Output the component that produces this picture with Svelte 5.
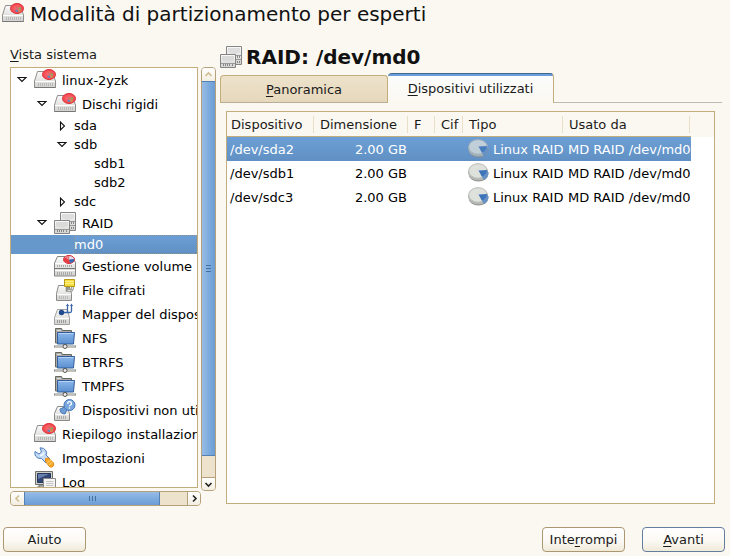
<script>
  const tree = [
    { label: 'linux-2yzk', depth: 0, icon: 'disk', arrow: 'down' },
    { label: 'Dischi rigidi', depth: 1, icon: 'disk', arrow: 'down' },
    { label: 'sda', depth: 2, arrow: 'right' },
    { label: 'sdb', depth: 2, arrow: 'down' },
    { label: 'sdb1', depth: 3 },
    { label: 'sdb2', depth: 3 },
    { label: 'sdc', depth: 2, arrow: 'right' },
    { label: 'RAID', depth: 1, icon: 'raid', arrow: 'down' },
    { label: 'md0', depth: 2 },
    { label: 'Gestione volume', depth: 1, icon: 'lvm' },
    { label: 'File cifrati', depth: 1, icon: 'crypt' },
    { label: 'Mapper del dispositivo', depth: 1, icon: 'mapper' },
    { label: 'NFS', depth: 1, icon: 'net' },
    { label: 'BTRFS', depth: 1, icon: 'net' },
    { label: 'TMPFS', depth: 1, icon: 'net' },
    { label: 'Dispositivi non utilizzati', depth: 1, icon: 'unused' },
    { label: 'Riepilogo installazione', depth: 0, icon: 'disk' },
    { label: 'Impostazioni', depth: 0, icon: 'tools' },
    { label: 'Log', depth: 0, icon: 'log' }
  ];
  const devices = ['/dev/sda2', '/dev/sdb1', '/dev/sdc3'];
  let selectedNode = $state('md0');
  let selectedDevice = $state('/dev/sda2');
</script>

{#snippet icon(name)}
  <svg class="icon" viewBox="0 0 22 22" aria-hidden="true"><use href="#i-{name}" /></svg>
{/snippet}

<svg width="0" height="0" class="defs" aria-hidden="true">
  <defs>
    <linearGradient id="metal" x2="0" y2="1"><stop stop-color="#fafafa" /><stop offset="1" stop-color="#d2d2d0" /></linearGradient>
    <linearGradient id="folder" x2="0" y2="1"><stop stop-color="#8db8ea" /><stop offset="1" stop-color="#5b8fd0" /></linearGradient>
    <radialGradient id="red"><stop stop-color="#ff7070" /><stop offset="1" stop-color="#f0464e" /></radialGradient>
    <symbol id="i-disk" viewBox="0 0 22 22">
      <path d="M3.500 2.500h14.500l3.500 9.500v6.500H.5V12z" fill="url(#metal)" stroke="#8f8f8d" />
      <path d="M1 12.500h20" stroke="#fff" /><path d="M.5 18.500h21" stroke="#777" />
      <path d="M4.500 14v3M6.500 14v3M8.500 14v3M10.500 14v3M12.500 14v3M14.500 14v3M16.500 14v3M18.500 14v3" stroke="#b9b9b7" />
      <ellipse cx="15" cy="5.500" rx="6.500" ry="5" fill="url(#red)" stroke="#dc2f38" />
      <path d="M14 3.500l2 .5v2h-2z" fill="#d2706a" /><path d="M16.500 4.500h2.500v2h-2.500z" fill="#7fae61" /><path d="M13.500 6.500l2.500.5v2l-2.500-.5z" fill="#5d84c8" /><path d="M16.500 7h2v2h-2z" fill="#c59a50" />
    </symbol>
    <symbol id="i-raid" viewBox="0 0 22 22">
      <path d="M6.500.5h15v18h-15z" fill="url(#metal)" stroke="#858585" />
      <path d="M8 2h12v4q-6 4-12 0z" fill="#dedede" /><path d="M16 9.500h5M16 13.500h5" stroke="#999" />
      <path d="M17.500 10v2M19.500 10v2M17.500 15v2M19.500 15v2" stroke="#888" />
      <path d="M.5 8.500h15v13H.5z" fill="url(#metal)" stroke="#858585" />
      <path d="M2 10h12v4q-6 3-12 0z" fill="#dadada" /><path d="M1 17.500h14" stroke="#999" />
      <path d="M3.500 18v2M5.500 18v2M7.500 18v2M9.500 18v2M12.500 18v2" stroke="#888" />
    </symbol>
    <symbol id="i-lvm" viewBox="0 0 22 22">
      <path d="M3.500 1.500h14.500l3.500 6v13.500H.5V8z" fill="url(#metal)" stroke="#858583" />
      <path d="M1 8.500h20M1 15.500h20" stroke="#fff" /><path d="M1 13.500h20" stroke="#777" />
      <path d="M3.500 10v2M5.500 10v2M7.500 10v2M9.500 10v2M11.500 10v2M13.500 10v2M15.500 10v2M17.500 10v2M3.500 17v3M5.500 17v3M7.500 17v3M9.500 17v3M11.500 17v3M13.500 17v3M15.500 17v3M17.500 17v3" stroke="#aaa" />
      <ellipse cx="15" cy="4.500" rx="5.500" ry="4" fill="#dfe2ea" stroke="#d32530" />
      <path d="M15 4.500L10.500 2q-2 4 1.500 5.500 2 1 4.500.5z" fill="#ea3d43" /><path d="M15 4.500l1 3.500q4.500-.5 4-4z" fill="#3764ae" /><path d="M15 4.500L10.500 2q2-1.500 5-1z" fill="#ef777a" />
    </symbol>
    <symbol id="i-crypt" viewBox="0 0 22 22">
      <path d="M4.500 6.500h10.500l2.500 8v7h-15v-7z" fill="url(#metal)" stroke="#8a8a88" />
      <path d="M3 15.500h14" stroke="#fff" /><path d="M5.500 17v3M7.500 17v3M9.500 17v3M11.500 17v3M13.500 17v3" stroke="#bbb" />
      <path d="M18.500 7v3q-.5 1.500-2 1.500h-3.500v-3h3" fill="none" stroke="#8e8e8a" stroke-width="2.500" /><path d="M18.500 7v3q-.5 1.500-2 1.500h-3" fill="none" stroke="#deded8" />
      <path d="M10.500.5h10v7h-10z" fill="#f5dc3e" stroke="#b69a16" /><path d="M11 2.500h9M11 4.500h9" stroke="#fff08a" />
    </symbol>
    <symbol id="i-mapper" viewBox="0 0 22 22">
      <path d="M3.500 6.500h9.500l2.500 8v7H.5v-7z" fill="url(#metal)" stroke="#a0a09e" />
      <path d="M1 15.500h14" stroke="#fff" /><path d="M3.500 17v3M5.500 17v3M7.500 17v3M9.500 17v3M11.500 17v3" stroke="#999" />
      <path d="M7 9.500h9q1.500 0 1.500-1.500V2M13.500 9V2" fill="none" stroke="#3765a6" stroke-width="1.300" /><path d="M12 3l1.500-2.500L15 3zM16 3l1.500-2.500L19 3z" fill="#3765a6" />
      <circle cx="7.500" cy="9.500" r="2.700" fill="#204a8b" />
    </symbol>
    <symbol id="i-net" viewBox="0 0 22 22">
      <path d="M1.500 16V1.500h6l1 2h9V16z" fill="#aaa9a3" stroke="#666661" /><path d="M3 3.500h4" stroke="#ddd" />
      <path d="M3.500 5.500h17L19.500 17h-16z" fill="url(#folder)" stroke="#315f9e" /><path d="M4.500 6.500h15" stroke="#b5d1f3" />
      <path d="M0 19.500h22" stroke="#88887f" stroke-width="2" /><path d="M1 19.500h20" stroke="#ccc" stroke-width=".8" />
      <path d="M11 17v1" stroke="#555" stroke-width="3" /><circle cx="11" cy="19.500" r="2" fill="#eee" stroke="#555550" />
    </symbol>
    <symbol id="i-unused" viewBox="0 0 22 22">
      <path d="M3.500 7.500h9.500l2.500 7v7H.5v-7z" fill="url(#metal)" stroke="#8a8a88" />
      <path d="M1 15.500h14" stroke="#fff" /><path d="M3.500 17v3M5.500 17v3M7.500 17v3M9.500 17v3M11.500 17v3" stroke="#aaa" />
      <path d="M6 10l4.500-2 1-2 4 4-3 1.500-1.500 3.500q-5 0-5-5z" fill="#6d9bd6" stroke="#4b78b3" />
      <circle cx="15.500" cy="6" r="5.500" fill="#79a6dd" stroke="#4678b8" />
      <path d="M13.700 4.700q0-2 1.900-2t1.900 1.700q0 1-1 1.600t-1 1.300" fill="none" stroke="#fff" stroke-width="1.300" /><circle cx="15.500" cy="9" r=".8" fill="#fff" />
    </symbol>
    <symbol id="i-tools" viewBox="0 0 22 22">
      <path d="M1 4.500l4 2.500 2.500-2L6 .8q4-.3 6 3 1 2 0 4.200l4 4-4 4-4.500-4.500Q3.500 12 1.500 9 .5 7 1 4.500z" fill="#c4daf4" stroke="#4c7dbd" />
      <path d="M6 8.500q3 0 4-3" stroke="#f2f8ff" fill="none" stroke-width="1.500" />
      <path d="M11.500 11.500l3-.5 5 5q1 3-1.500 4-2 .5-3-1l-3.500-4.500z" fill="#f6a828" stroke="#e48b13" /><path d="M13 16l4-3M15 18l3.500-3" stroke="#ffd479" />
    </symbol>
    <symbol id="i-log" viewBox="0 0 22 22">
      <path d="M1.500.5h17v13h-17z" fill="#d0d0ca" stroke="#6d6d69" /><path d="M3.500 2.500h13v9h-13z" fill="#324675" stroke="#26375f" /><path d="M4 3h11L4 8z" fill="#6880ae" />
      <path d="M5 14h5v2h2v2.500H3V16h2z" fill="#aaa" stroke="#777" />
      <path d="M9.500 7.500h12v14h-12z" fill="#f5f5f5" stroke="#888" /><path d="M12 10.500h7.500M12 12.500h7.500M12 14.500h7.500M12 16.500h7.500" stroke="#c3c3c3" />
    </symbol>
    <symbol id="i-pie" viewBox="0 0 22 22">
      <ellipse cx="10.500" cy="11.500" rx="10" ry="8" fill="#8d908c" /><ellipse cx="10.300" cy="10.500" rx="10" ry="8" fill="#b6b9b5" />
      <ellipse cx="10" cy="9" rx="9.300" ry="7.300" fill="#dfe1dd" stroke="#b7bab5" />
      <path d="M10.500 8.500l8.500-.5q.5 4.500-5 7z" fill="#3e75ba" /><path d="M14 15q5-2.500 5-7l1.500 3q-.5 4.500-4.500 7z" fill="#6590c5" />
    </symbol>
  </defs>
</svg>

<main class="app">
  <header class="title">{@render icon('disk')}<h1>Modalità di partizionamento per esperti</h1></header>

  <div class="content">
    <section class="side">
      <div class="side-label" id="tree-label"><u>V</u>ista sistema</div>
      <div class="tree-area">
        <ul class="tree" role="tree" aria-labelledby="tree-label">
          {#each tree as node}
            <li class="depth{node.depth}" class:tall={node.icon} class:selected={selectedNode === node.label} role="treeitem" aria-selected={selectedNode === node.label}>
              <span class="toggle">
                {#if node.arrow}
                  <button aria-label="Espandi {node.label}">
                    <svg width="12" height="12" viewBox="0 0 12 12">
                      {#if node.arrow === 'down'}
                        <path d="M2 3.500h8L6 7.500z" />
                      {:else}
                        <path d="M4.500 2v8L8.500 6z" />
                      {/if}
                    </svg>
                  </button>
                {/if}
              </span>
              <button class="node" onclick={() => (selectedNode = node.label)}>
                {#if node.icon}{@render icon(node.icon)}{/if}
                <span class="name">{node.label}</span>
              </button>
            </li>
          {/each}
        </ul>
        <div class="bar vertical">
          <button class="step off" aria-label="Su"><svg width="9" height="9" viewBox="0 0 9 9"><path d="M1.500 6l3-3 3 3" /></svg></button>
          <div class="thumb"><i></i><i></i><i></i></div>
          <div class="rest"></div>
          <button class="step" aria-label="Giù"><svg width="9" height="9" viewBox="0 0 9 9"><path d="M1.500 3l3 3 3-3" /></svg></button>
        </div>
      </div>
      <div class="bar horizontal">
        <button class="step off" aria-label="Sinistra"><svg width="9" height="9" viewBox="0 0 9 9"><path d="M6 1.500l-3 3 3 3" /></svg></button>
        <div class="thumb"><i></i><i></i><i></i></div>
        <div class="rest"></div>
        <button class="step" aria-label="Destra"><svg width="9" height="9" viewBox="0 0 9 9"><path d="M3 1.500l3 3-3 3" /></svg></button>
      </div>
    </section>

    <section class="detail">
      <div class="heading">{@render icon('raid')}<h2>RAID: /dev/md0</h2></div>
      <div class="tabs" role="tablist">
        <button class="tab" role="tab" aria-selected="false"><span><u>P</u>anoramica</span></button>
        <button class="tab active" role="tab" aria-selected="true"><span><u>D</u>ispositivi utilizzati</span></button>
        <div class="tab-line"></div>
      </div>
      <div class="frame">
        <table>
          <colgroup><col class="c-dev" /><col class="c-size" /><col class="c-f" /><col class="c-enc" /><col class="c-type" /><col class="c-used" /></colgroup>
          <thead>
            <tr>
              {#each ['Dispositivo', 'Dimensione', 'F', 'Cif', 'Tipo', 'Usato da'] as title}
                <th><span>{title}</span></th>
              {/each}
            </tr>
          </thead>
          <tbody>
            {#each devices as device}
              <tr class:selected={selectedDevice === device} onclick={() => (selectedDevice = device)}>
                <td>{device}</td>
                <td class="size">2.00 GB</td>
                <td></td>
                <td></td>
                <td><span class="type">{@render icon('pie')}Linux RAID</span></td>
                <td>MD RAID /dev/md0</td>
              </tr>
            {/each}
          </tbody>
        </table>
      </div>
    </section>
  </div>

  <footer>
    <button class="push">Aiuto</button>
    <span class="spacer"></span>
    <button class="push">Inte<u>r</u>rompi</button>
    <button class="push default"><u>A</u>vanti</button>
  </footer>
</main>

<style>
  :global(body) { background: #fbf8f1; }
  .defs { display: block; }
  .app {
    display: flex; flex-direction: column; box-sizing: border-box; height: 100vh; min-height: 320px;
    font: 13px/19px "DejaVu Sans", sans-serif; color: #1a1a1a; background: #fbf8f1;
  }
  button { font: inherit; color: inherit; margin: 0; padding: 0; border: 0; background: none; box-sizing: border-box; }
  u { text-underline-offset: 2px; text-decoration-thickness: 1px; text-decoration-skip-ink: none; }
  .icon { width: 22px; height: 22px; flex: none; display: block; }
  h1, h2 { margin: 0; font-size: 20px; line-height: 28px; white-space: nowrap; color: #111; }
  h1 { font-weight: 400; }
  .title { display: flex; align-items: center; gap: 6px; padding-left: 2px; height: 28px; flex: none; }
  .content { flex: 1; min-height: 0; display: flex; gap: 4px; padding-right: 8px; }

  .side { flex: 0 0 216px; min-width: 0; box-sizing: border-box; padding: 17px 0 0 10px; display: flex; flex-direction: column; }
  .side-label { height: 22px; flex: none; }
  .tree-area { flex: 1; min-height: 0; display: flex; gap: 3px; }
  .tree { flex: 1; min-width: 0; margin: 0 0 3px; padding: 0; list-style: none; overflow: hidden; border: 1px solid #c4ad7c; background: #fff; color: #000; }
  .tree li { display: flex; height: 19px; }
  .tree li.tall { height: 24px; }
  .toggle { flex: none; display: flex; justify-content: flex-end; align-items: center; width: 17px; padding-right: 6px; }
  .depth1 .toggle { width: 37px; }
  .depth2 .toggle { width: 57px; }
  .depth3 .toggle { width: 77px; }
  .toggle button, .toggle svg { display: block; }
  .toggle path { fill: #fff; stroke: #111; stroke-width: 1.1; }
  .node { flex: 1; min-width: 0; display: flex; align-items: center; gap: 4px; overflow: hidden; }
  .name { white-space: nowrap; padding-left: 2px; }
  .tree li:not(.tall) .name { padding: 0; }
  .selected { background: #6698cc; color: #fff; }
  .tree .selected .node { background: linear-gradient(#6c9fd6, #6090c3); outline: 1px dotted #8d9490; outline-offset: -1px; }

  .bar { flex: none; display: flex; box-sizing: border-box; border: 1px solid #b5a07a; border-radius: 4px; background: #ede3cd; overflow: hidden; }
  .vertical { width: 15px; flex-direction: column; }
  .horizontal { height: 15px; margin-right: 15px; }
  .step { flex: 0 0 13px; display: flex; align-items: center; justify-content: center; background: linear-gradient(#fff, #f3eee1); }
  .step path { fill: none; stroke: #222; stroke-width: 1.6; }
  .step.off path { stroke: #d0bc90; }
  .thumb { display: flex; align-items: center; justify-content: center; gap: 2px; border: 1px solid #5580b3; box-sizing: border-box; }
  .vertical .thumb { flex: 374; flex-direction: column; margin: 0 -1px; background: linear-gradient(90deg, #97bce6, #7aa9dd 60%, #6c9cd3); }
  .vertical .thumb i { width: 5px; height: 1px; background: #46719f; }
  .vertical .rest { flex: 21; }
  .vertical .step:last-child { border-top: 1px solid #b5a07a; }
  .horizontal .thumb { flex: 134; margin: -1px 0; background: linear-gradient(#97bce6, #7aa9dd 60%, #6c9cd3); }
  .horizontal .thumb i { width: 1px; height: 5px; background: #46719f; }
  .horizontal .rest { flex: 27; }
  .horizontal .step:last-child { border-left: 1px solid #b5a07a; }

  .detail { flex: 1; min-width: 0; display: flex; flex-direction: column; padding-top: 15px; }
  .heading { flex: none; display: flex; align-items: center; gap: 4px; height: 28px; }
  .tabs { flex: none; display: flex; align-items: flex-end; height: 32px; }
  .tab { width: 168px; height: 28px; border: 1px solid #c4ad7c; border-bottom-color: #b9ad98; border-radius: 4px 4px 0 0; background: linear-gradient(#ede2cb, #e6d8bc); }
  .tab.active { width: 166px; height: 30px; border: 1px solid #c4ad7c; border-width: 1px 1px 0 0; border-top-color: #43648c; background: linear-gradient(#6a9fdb 2px, #fbfcfc 2px, #fbf8f1); }
  .tab-line { flex: 1; height: 1px; background: #c0bab0; }
  .frame { flex: 1; min-height: 0; margin: 8px 7px 2px 6px; border: 1px solid #c4ad7c; background: linear-gradient(#fbf8f1, #fbf8f1) 0 0 / 100% 25px no-repeat #fff; overflow: hidden; }
  table { table-layout: fixed; width: 464px; border-collapse: separate; border-spacing: 0; color: #000; }
  .c-dev { width: 88px; }
  .c-size { width: 94px; }
  .c-f { width: 27px; }
  .c-enc { width: 28px; }
  .c-type { width: 100px; }
  .c-used { width: 127px; }
  th { height: 24px; padding: 0; border-bottom: 1px solid #c4ad7c; font-weight: 400; text-align: left; color: #1a1a1a; }
  th span { display: block; height: 17px; line-height: 17px; padding-left: 4px; border-right: 1px solid #e9dfc8; margin-right: 1px; white-space: nowrap; }
  td { height: 24px; padding: 0 0 0 3px; white-space: nowrap; }
  th + th span { padding-left: 5px; }
  td + td { padding-left: 4px; }
  td.size { text-align: right; padding-right: 2px; }
  .type { display: flex; align-items: center; gap: 3px; }
  tr.selected { color: #fff; background: linear-gradient(#6c9fd6, #6090c3); }
  tr.selected .icon { opacity: 0.75; }

  footer { flex: none; display: flex; gap: 17px; padding: 21px 5px 4px 3px; }
  .spacer { flex: 1; }
  .push { width: 83px; height: 25px; border: 1px solid #ab9871; border-radius: 4px; background: linear-gradient(#fff, #fbf9f4 55%, #f0ead9); }
  .push.default { border-color: #647e9d; }
</style>
